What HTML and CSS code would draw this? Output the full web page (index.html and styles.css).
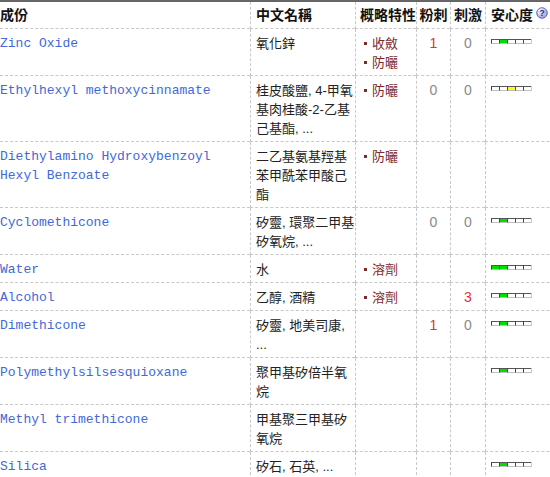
FILE: index.html
```html
<!DOCTYPE html>
<html lang="zh-Hant">
<head>
<meta charset="utf-8">
<title>成份表</title>
<link rel="stylesheet" href="styles.css">
</head>
<body>
<table class="ingr">
  <colgroup>
    <col class="c-name"><col class="c-zh"><col class="c-feat"><col class="c-num"><col class="c-num2"><col class="c-safe">
  </colgroup>
  <thead>
    <tr>
      <th class="name">成份</th>
      <th class="zh">中文名稱</th>
      <th class="feat">概略特性</th>
      <th class="num">粉刺</th>
      <th class="num">刺激</th>
      <th class="safe">安心度<svg class="help" width="12" height="12" viewBox="0 0 12 12"><defs><radialGradient id="hg" cx="0.35" cy="0.3" r="0.8"><stop offset="0" stop-color="#ffffff"/><stop offset="1" stop-color="#8c8fe6"/></radialGradient></defs><circle cx="6" cy="6" r="5.3" fill="url(#hg)" stroke="#5a5cb0" stroke-width="0.9"/><text x="6" y="9.2" text-anchor="middle" font-family="Liberation Sans, sans-serif" font-size="9" font-weight="bold" fill="#1e2a8a">?</text></svg></th>
    </tr>
  </thead>
  <tbody>
    <tr>
      <td class="name">Zinc Oxide</td>
      <td class="zh">氧化鋅</td>
      <td class="feat"><ul class="tags"><li>收斂</li><li>防曬</li></ul></td>
      <td class="num bad">1</td>
      <td class="num ok">0</td>
      <td class="safe"><span class="bar"><i></i><i class="g"></i><i></i><i></i><i></i></span></td>
    </tr>
    <tr>
      <td class="name">Ethylhexyl methoxycinnamate</td>
      <td class="zh">桂皮酸鹽, 4-甲氧基肉桂酸-2-乙基己基酯, ...</td>
      <td class="feat"><ul class="tags"><li>防曬</li></ul></td>
      <td class="num ok">0</td>
      <td class="num ok">0</td>
      <td class="safe"><span class="bar"><i></i><i></i><i class="y"></i><i></i><i></i></span></td>
    </tr>
    <tr>
      <td class="name">Diethylamino Hydroxybenzoyl Hexyl Benzoate</td>
      <td class="zh">二乙基氨基羥基苯甲酰苯甲酸己酯</td>
      <td class="feat"><ul class="tags"><li>防曬</li></ul></td>
      <td class="num"></td>
      <td class="num"></td>
      <td class="safe"></td>
    </tr>
    <tr>
      <td class="name">Cyclomethicone</td>
      <td class="zh">矽靈, 環聚二甲基矽氧烷, ...</td>
      <td class="feat"></td>
      <td class="num ok">0</td>
      <td class="num ok">0</td>
      <td class="safe"><span class="bar"><i></i><i class="g"></i><i></i><i></i><i></i></span></td>
    </tr>
    <tr>
      <td class="name">Water</td>
      <td class="zh">水</td>
      <td class="feat"><ul class="tags"><li>溶劑</li></ul></td>
      <td class="num"></td>
      <td class="num"></td>
      <td class="safe"><span class="bar"><i class="g"></i><i class="g"></i><i></i><i></i><i></i></span></td>
    </tr>
    <tr>
      <td class="name">Alcohol</td>
      <td class="zh">乙醇, 酒精</td>
      <td class="feat"><ul class="tags"><li>溶劑</li></ul></td>
      <td class="num"></td>
      <td class="num bad">3</td>
      <td class="safe"><span class="bar"><i></i><i class="g"></i><i></i><i></i><i></i></span></td>
    </tr>
    <tr>
      <td class="name">Dimethicone</td>
      <td class="zh">矽靈, 地美司康, ...</td>
      <td class="feat"></td>
      <td class="num bad">1</td>
      <td class="num ok">0</td>
      <td class="safe"><span class="bar"><i></i><i class="g"></i><i></i><i></i><i></i></span></td>
    </tr>
    <tr>
      <td class="name">Polymethylsilsesquioxane</td>
      <td class="zh">聚甲基矽倍半氧烷</td>
      <td class="feat"></td>
      <td class="num"></td>
      <td class="num"></td>
      <td class="safe"><span class="bar"><i></i><i class="g"></i><i></i><i></i><i></i></span></td>
    </tr>
    <tr>
      <td class="name">Methyl trimethicone</td>
      <td class="zh">甲基聚三甲基矽氧烷</td>
      <td class="feat"></td>
      <td class="num"></td>
      <td class="num"></td>
      <td class="safe"></td>
    </tr>
    <tr>
      <td class="name">Silica</td>
      <td class="zh">矽石, 石英, ...</td>
      <td class="feat"></td>
      <td class="num"></td>
      <td class="num"></td>
      <td class="safe"><span class="bar"><i></i><i class="g"></i><i></i><i></i><i></i></span></td>
    </tr>
  </tbody>
</table>
</body>
</html>
```

FILE: styles.css
```css
html, body {
  margin: 0;
  padding: 0;
  overflow: hidden;
  background: #fff;
}

body {
  font-family: "Liberation Sans", "Noto Sans CJK TC", sans-serif;
  font-size: 13px;
  color: #222;
}

.ingr {
  border-collapse: separate;
  border-spacing: 0;
  table-layout: fixed;
  width: 570px;
  border-top: 2px solid #666;
}

.c-name { width: 250px; }
.c-zh { width: 105px; }
.c-feat { width: 61px; }
.c-num { width: 34px; }
.c-num2 { width: 35px; }
.c-safe { width: 85px; }

.ingr th,
.ingr td {
  border-left: 1px dashed #c8c8c8;
  border-bottom: 1px dashed #c8c8c8;
  line-height: 19px;
  vertical-align: top;
  text-align: left;
  padding: 5px 0 3px 5px;
}

.ingr th {
  font-size: 14px;
  font-weight: bold;
  color: #111;
  white-space: nowrap;
  line-height: 20px;
  padding: 3px 0 3px 5px;
}

.ingr th.name,
.ingr td.name {
  border-left: none;
  padding-left: 0;
  padding-right: 5px;
}

.ingr td.name {
  font-family: "Liberation Mono", monospace;
  color: #4169d9;
}

.ingr th.feat { padding-left: 4px; }
.ingr td.feat { padding-left: 8px; }

.ingr .num {
  text-align: center;
  padding-left: 0;
}

.ingr td.num { font-size: 14px; }
.num.bad { color: #e5303a; }
.num.ok { color: #8a8a8a; }

.tags {
  list-style: none;
  margin: 0;
  padding: 0;
  color: #7e2a2a;
}

.tags li::before {
  content: "";
  display: inline-block;
  width: 3px;
  height: 3px;
  background: #7e2a2a;
  margin-right: 5px;
  vertical-align: middle;
  position: relative;
  top: -1px;
}

.help {
  vertical-align: top;
  margin-left: 3px;
  margin-top: 2px;
}

.bar {
  display: inline-flex;
  vertical-align: middle;
  position: relative;
  top: -3px;
  border-right: 1px solid #c8c8c8;
}

.bar i {
  display: block;
  width: 7px;
  height: 3px;
  background: #fff;
  border-top: 1px solid #555;
  border-left: 1px solid #444;
  border-bottom: 1px solid #c0c0c0;
}

.bar i.g { background: #00dd00; }
.bar i.y { background: #ffff00; }
```
